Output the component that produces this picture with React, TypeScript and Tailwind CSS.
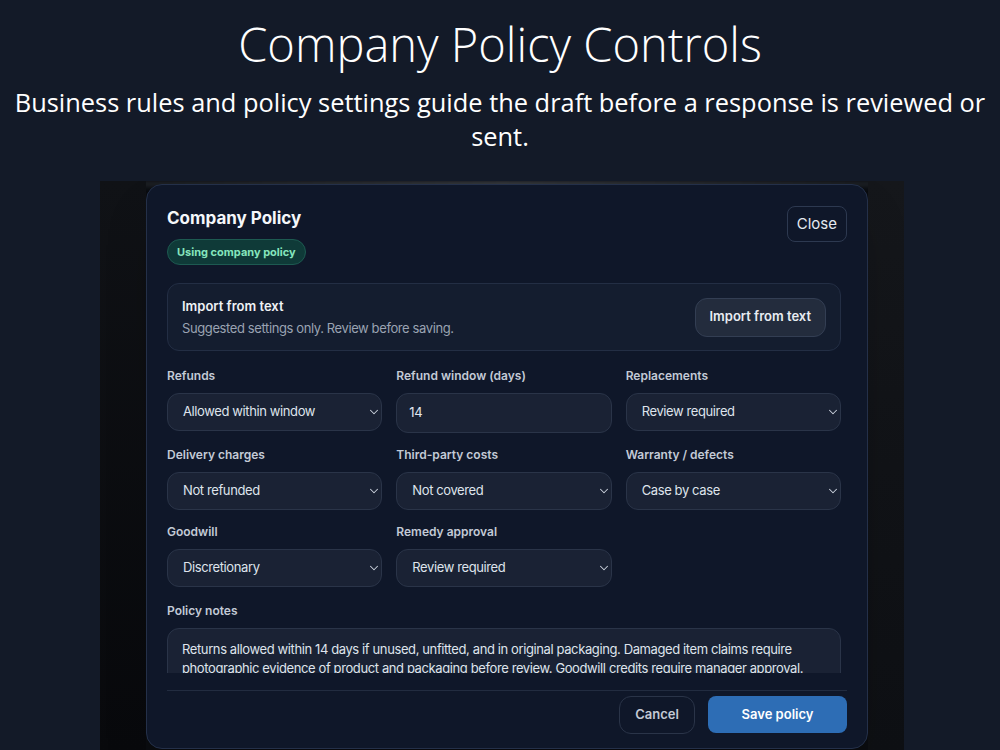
import { ChevronDown } from "lucide-react"

const selectRows = [
  [
    { label: "Refunds", value: "Allowed within window", kind: "select" },
    { label: "Refund window (days)", value: "14", kind: "input" },
    { label: "Replacements", value: "Review required", kind: "select" },
  ],
  [
    { label: "Delivery charges", value: "Not refunded", kind: "select" },
    { label: "Third-party costs", value: "Not covered", kind: "select" },
    { label: "Warranty / defects", value: "Case by case", kind: "select" },
  ],
  [
    { label: "Goodwill", value: "Discretionary", kind: "select" },
    { label: "Remedy approval", value: "Review required", kind: "select" },
  ],
]

const Field = ({ label, value, kind }: { label: string; value: string; kind: string }) => (
  <div className="flex flex-col">
    <label className="text-[12px] leading-[16px] font-semibold text-[#c3cad6] mb-[9px]">{label}</label>
    {kind === "input" ? (
      <div className="h-[40px] rounded-xl bg-[#1a2234] border border-[#2a3448] flex items-center px-3 text-[13px] tracking-[-0.03em] text-[#e2e8f0]">
        {value}
      </div>
    ) : (
      <div className="h-[38px] rounded-xl bg-[#1a2234] border border-[#2a3448] flex items-center justify-between pl-[15px] pr-0 text-[13px] tracking-[-0.03em] text-[#dfe4ec]">
        <span>{value}</span>
        <ChevronDown size={14} strokeWidth={1.8} className="text-[#cbd2dd]" />
      </div>
    )}
  </div>
)

const App = () => {
  return (
    <div className="w-[1000px] h-[750px] overflow-hidden bg-[#131a28] flex flex-col" style={{ fontFamily: "Inter, 'Noto Sans', sans-serif" }}>
      <div className="text-center text-white pt-[16px]" style={{ fontFamily: "'Open Sans', sans-serif" }}>
        <h1 className="text-[47px] leading-[56px] font-light">Company Policy Controls</h1>
        <p className="text-[25.4px] leading-[34px] mt-[13px] px-[8px]">
          Business rules and policy settings guide the draft before a response is reviewed or sent.
        </p>
      </div>

      {/* blurred app behind the modal */}
      <div className="mt-[28px] ml-[100px] w-[804px] flex-1 bg-[#0a0c10] relative overflow-hidden">
        <div className="absolute inset-x-0 top-0 h-[6px] bg-gradient-to-r from-[#1a1d22] via-[#3a3d42] to-[#1a1d22] blur-[2px]" />
        <div className="absolute right-0 top-0 w-[36px] h-full bg-gradient-to-b from-[#15171b] via-[#111317] to-[#0e1014]" />
        <div className="absolute left-0 top-0 w-[46px] h-full bg-gradient-to-b from-[#101216] to-[#08090c]" />

        <div className="relative ml-[46px] mt-[3px] w-[722px] h-[565px] rounded-2xl bg-[#0f1729] border border-[#243049] shadow-2xl flex flex-col px-[20px] pt-[21px]">
          <div className="flex justify-between items-start">
            <div>
              <h2 className="text-[17px] leading-[24px] font-bold text-[#f5f7fa]">Company Policy</h2>
              <span className="inline-block mt-[9px] h-[26px] leading-[24px] px-[9px] rounded-full bg-[#0f3a38] border border-[#1d5a51] text-[11px] font-bold text-[#86e6bd]">
                Using company policy
              </span>
            </div>
            <button className="h-[36px] px-[9px] rounded-lg border border-[#2d3950] text-[15px] text-[#e5e9f0]">Close</button>
          </div>

          <div className="h-[390px] overflow-hidden pr-[6px] mt-[18px]">
            <div className="h-[68px] rounded-xl bg-[#141d2f] border border-[#232e44] flex items-center justify-between pl-[14px] pr-[14px]">
              <div>
                <p className="text-[13px] leading-[18px] font-semibold text-[#eef1f5]">Import from text</p>
                <p className="text-[13px] leading-[18px] mt-[4px] tracking-[-0.03em] text-[#9aa3b2]">Suggested settings only. Review before saving.</p>
              </div>
              <button className="h-[39px] px-[14px] rounded-xl bg-[#232c3d] border border-[#333e53] text-[13px] font-semibold text-[#e8ecf2]">
                Import from text
              </button>
            </div>

            <div className="mt-[17px] flex flex-col gap-[14px]">
              {selectRows.map((row, i) => (
                <div key={i} className="grid grid-cols-3 gap-[14px]">
                  {row.map((f) => (
                    <Field key={f.label} {...f} />
                  ))}
                </div>
              ))}
            </div>

            <div className="mt-[16px]">
              <label className="block text-[12px] leading-[16px] font-semibold text-[#c3cad6] mb-[9px]">Policy notes</label>
              <div className="rounded-xl bg-[#1a2234] border border-[#2a3448] px-[14px] pt-[11px] pb-[12px] text-[13px] leading-[19px] tracking-[-0.03em] text-[#dfe4ec]">
                Returns allowed within 14 days if unused, unfitted, and in original packaging. Damaged item claims require photographic evidence of product and packaging before review. Goodwill credits require manager approval.
              </div>
            </div>
          </div>

          <div className="mt-[17px] border-t border-[#222c40] pt-[5px] flex justify-end gap-[13px]">
            <button className="h-[38px] w-[76px] rounded-xl border border-[#2a3448] text-[13px] font-semibold text-[#c4cad5]">Cancel</button>
            <button className="h-[37px] w-[139px] rounded-lg bg-[#2d6db5] text-[13px] font-semibold text-white">Save policy</button>
          </div>
        </div>
      </div>
    </div>
  )
}

export default App
